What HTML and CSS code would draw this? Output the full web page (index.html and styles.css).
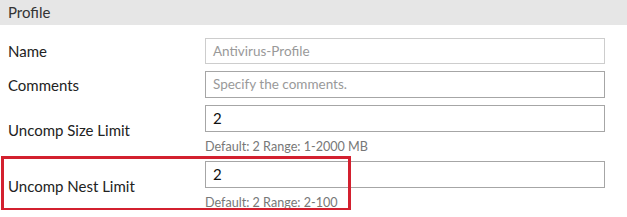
FILE: index.html
```html
<!DOCTYPE html>
<html lang="en">
<head>
  <meta charset="UTF-8" />
  <title>Profile</title>
  <link rel="stylesheet" href="styles.css">
</head>
<body>
  <!-- Profile section -->
  <div class="section-title">Profile</div>

  <div class="form">
    <div class="row">
      <label class="label">Name</label>
      <div class="field">
        <div class="input input-readonly">Antivirus-Profile</div>
      </div>
    </div>

    <div class="row">
      <label class="label">Comments</label>
      <div class="field">
        <div class="input placeholder">Specify the comments.</div>
      </div>
    </div>

    <div class="row row-hint">
      <label class="label">Uncomp Size Limit</label>
      <div class="field">
        <div class="input">2</div>
        <div class="hint">Default: 2 Range: 1-2000 MB</div>
      </div>
    </div>

    <div class="row row-hint">
      <label class="label">Uncomp Nest Limit</label>
      <div class="field">
        <div class="input">2</div>
        <div class="hint">Default: 2 Range: 2-100</div>
      </div>
      <div class="highlight"></div>
    </div>
  </div>
</body>
</html>
```

FILE: styles.css
```css
html {
  overflow: hidden;
}

body {
  margin: 0;
  padding: 0;
  background: #fff;
  font-family: Lato, "Open Sans", sans-serif;
  color: #222;
}

.section-title {
  height: 25px;
  line-height: 25px;
  padding-left: 8px;
  background: #e6e6e6;
  font-size: 15px;
  color: #333;
}

.form {
  padding-top: 13px;
  display: flex;
  flex-direction: column;
  gap: 7px;
}

.row {
  display: grid;
  grid-template-columns: 205px 400px;
  align-items: center;
  position: relative;
}

.label {
  padding-left: 8px;
  font-size: 15px;
  line-height: 18px;
  color: #222;
}

.row-hint .label {
  align-self: start;
  margin-top: 16px;
}

.input {
  box-sizing: border-box;
  height: 27px;
  line-height: 25px;
  border: 1px solid #a6a6a6;
  padding-left: 7px;
  font-size: 15px;
  color: #111;
}

.input-readonly {
  height: 26px;
  line-height: 24px;
  border-color: #cdcdcd;
  color: #999;
  font-size: 13.5px;
}

.placeholder {
  color: #999;
  font-size: 13.5px;
}

.hint {
  font-size: 12.6px;
  color: #777;
  margin-top: 8px;
  line-height: 14px;
}

/* red annotation box */
.highlight {
  position: absolute;
  left: 1px;
  top: -5px;
  width: 350px;
  height: 55px;
  box-sizing: border-box;
  border: 3px solid #d3202f;
}
```
